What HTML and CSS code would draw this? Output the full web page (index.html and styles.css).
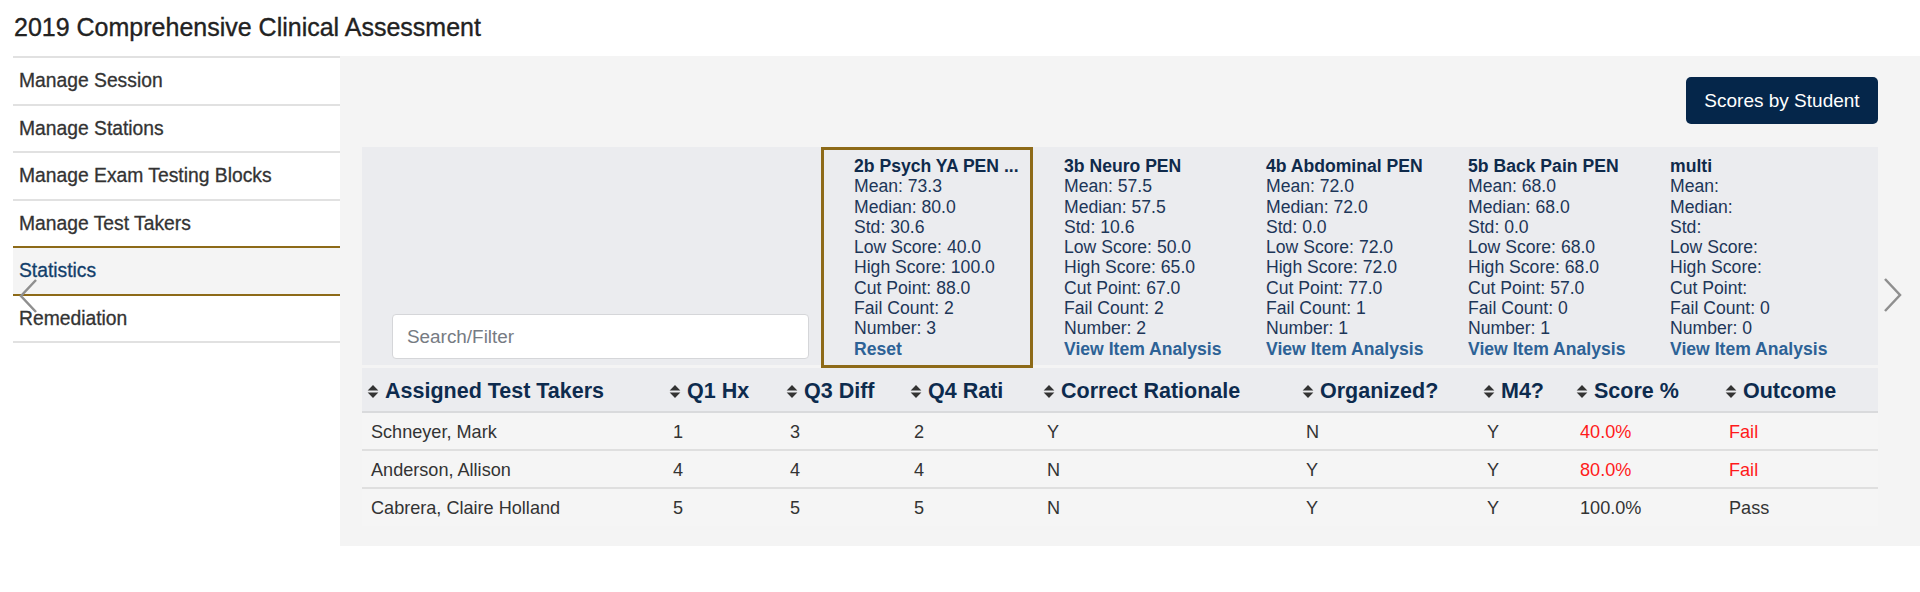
FILE: index.html
```html
<!DOCTYPE html>
<html lang="en">
<head>
<meta charset="utf-8">
<title>2019 Comprehensive Clinical Assessment</title>
<link rel="stylesheet" href="styles.css">
</head>
<body>
<div class="page">
  <h1 class="title">2019 Comprehensive Clinical Assessment</h1>
  <div class="layout">
    <nav class="sidebar">
      <ul class="nav">
        <li class="nav-item">Manage Session</li>
        <li class="nav-item">Manage Stations</li>
        <li class="nav-item">Manage Exam Testing Blocks</li>
        <li class="nav-item">Manage Test Takers</li>
        <li class="nav-item active">Statistics</li>
        <li class="nav-item">Remediation</li>
      </ul>
    </nav>
    <main class="main">
      <div class="toolbar">
        <button class="btn-primary" type="button">Scores by Student</button>
      </div>
      <section class="stats">
        <div class="filter">
          <input class="search" type="text" placeholder="Search/Filter">
        </div>
        <div class="cards">
          <div class="card active">
            <div class="card-title">2b Psych YA PEN ...</div>
            <div>Mean: 73.3</div>
            <div>Median: 80.0</div>
            <div>Std: 30.6</div>
            <div>Low Score: 40.0</div>
            <div>High Score: 100.0</div>
            <div>Cut Point: 88.0</div>
            <div>Fail Count: 2</div>
            <div>Number: 3</div>
            <div class="card-link">Reset</div>
          </div>
          <div class="card">
            <div class="card-title">3b Neuro PEN</div>
            <div>Mean: 57.5</div>
            <div>Median: 57.5</div>
            <div>Std: 10.6</div>
            <div>Low Score: 50.0</div>
            <div>High Score: 65.0</div>
            <div>Cut Point: 67.0</div>
            <div>Fail Count: 2</div>
            <div>Number: 2</div>
            <div class="card-link">View Item Analysis</div>
          </div>
          <div class="card">
            <div class="card-title">4b Abdominal PEN</div>
            <div>Mean: 72.0</div>
            <div>Median: 72.0</div>
            <div>Std: 0.0</div>
            <div>Low Score: 72.0</div>
            <div>High Score: 72.0</div>
            <div>Cut Point: 77.0</div>
            <div>Fail Count: 1</div>
            <div>Number: 1</div>
            <div class="card-link">View Item Analysis</div>
          </div>
          <div class="card">
            <div class="card-title">5b Back Pain PEN</div>
            <div>Mean: 68.0</div>
            <div>Median: 68.0</div>
            <div>Std: 0.0</div>
            <div>Low Score: 68.0</div>
            <div>High Score: 68.0</div>
            <div>Cut Point: 57.0</div>
            <div>Fail Count: 0</div>
            <div>Number: 1</div>
            <div class="card-link">View Item Analysis</div>
          </div>
          <div class="card">
            <div class="card-title">multi</div>
            <div>Mean:</div>
            <div>Median:</div>
            <div>Std:</div>
            <div>Low Score:</div>
            <div>High Score:</div>
            <div>Cut Point:</div>
            <div>Fail Count: 0</div>
            <div>Number: 0</div>
            <div class="card-link">View Item Analysis</div>
          </div>
        </div>
      </section>
      <table class="grid">
        <colgroup>
          <col class="c-name"><col class="c-q1"><col class="c-q3"><col class="c-q4"><col class="c-cr"><col class="c-org"><col class="c-m4"><col class="c-score"><col class="c-out">
        </colgroup>
        <thead>
          <tr>
            <th><svg class="sort" viewBox="0 0 10 14"><path d="M0 6 L5 1 L10 6 Z M0 8 L5 13 L10 8 Z"/></svg>Assigned Test Takers</th>
            <th><svg class="sort" viewBox="0 0 10 14"><path d="M0 6 L5 1 L10 6 Z M0 8 L5 13 L10 8 Z"/></svg>Q1 Hx</th>
            <th><svg class="sort" viewBox="0 0 10 14"><path d="M0 6 L5 1 L10 6 Z M0 8 L5 13 L10 8 Z"/></svg>Q3 Diff</th>
            <th><svg class="sort" viewBox="0 0 10 14"><path d="M0 6 L5 1 L10 6 Z M0 8 L5 13 L10 8 Z"/></svg>Q4 Rati</th>
            <th><svg class="sort" viewBox="0 0 10 14"><path d="M0 6 L5 1 L10 6 Z M0 8 L5 13 L10 8 Z"/></svg>Correct Rationale</th>
            <th><svg class="sort" viewBox="0 0 10 14"><path d="M0 6 L5 1 L10 6 Z M0 8 L5 13 L10 8 Z"/></svg>Organized?</th>
            <th><svg class="sort" viewBox="0 0 10 14"><path d="M0 6 L5 1 L10 6 Z M0 8 L5 13 L10 8 Z"/></svg>M4?</th>
            <th><svg class="sort" viewBox="0 0 10 14"><path d="M0 6 L5 1 L10 6 Z M0 8 L5 13 L10 8 Z"/></svg>Score %</th>
            <th><svg class="sort" viewBox="0 0 10 14"><path d="M0 6 L5 1 L10 6 Z M0 8 L5 13 L10 8 Z"/></svg>Outcome</th>
          </tr>
        </thead>
        <tbody>
          <tr>
            <td>Schneyer, Mark</td><td>1</td><td>3</td><td>2</td><td>Y</td><td>N</td><td>Y</td><td class="fail">40.0%</td><td class="fail">Fail</td>
          </tr>
          <tr>
            <td>Anderson, Allison</td><td>4</td><td>4</td><td>4</td><td>N</td><td>Y</td><td>Y</td><td class="fail">80.0%</td><td class="fail">Fail</td>
          </tr>
          <tr>
            <td>Cabrera, Claire Holland</td><td>5</td><td>5</td><td>5</td><td>N</td><td>Y</td><td>Y</td><td>100.0%</td><td>Pass</td>
          </tr>
        </tbody>
      </table>
    </main>
    <svg class="chev chev-prev" viewBox="0 0 18 34"><path d="M17 1 L2 17 L17 33"/></svg>
    <svg class="chev chev-next" viewBox="0 0 18 34"><path d="M1 1 L16 17 L1 33"/></svg>
  </div>
</div>
</body>
</html>
```

FILE: styles.css
```css
* { box-sizing: border-box; }

html, body {
  margin: 0;
  padding: 0;
  background: #ffffff;
  font-family: "Liberation Sans", Arial, sans-serif;
  color: #333333;
}

.page {
  width: 1920px;
}

.title {
  margin: 0;
  height: 56px;
  padding: 12px 0 0 14px;
  font-size: 25px;
  line-height: 30px;
  font-weight: normal;
  color: #222222;
  -webkit-text-stroke: 0.35px #222222;
}

.layout {
  position: relative;
  display: flex;
  align-items: flex-start;
}

/* Sidebar */
.sidebar {
  width: 327px;
  margin-left: 13px;
  flex: none;
}

.nav {
  list-style: none;
  margin: 0;
  padding: 0;
  border-bottom: 2px solid #e1e1e1;
}

.nav-item {
  height: 47.5px;
  line-height: 45.5px;
  border-top: 2px solid #e1e1e1;
  padding-left: 6px;
  font-size: 19.3px;
  color: #333333;
  -webkit-text-stroke: 0.3px #333333;
}

.nav-item.active {
  background: #f4f4f4;
  border-top-color: #8d6a18;
  color: #123e6a;
  -webkit-text-stroke: 0.3px #123e6a;
}

.nav-item.active + .nav-item {
  border-top-color: #8d6a18;
}

/* Main */
.main {
  flex: 1;
  background: #f4f4f4;
  padding: 21px 42px 20px 22px;
}

.toolbar {
  display: flex;
  justify-content: flex-end;
  margin-bottom: 23px;
}

.btn-primary {
  width: 192px;
  height: 47px;
  border: none;
  border-radius: 5px;
  background: #05264a;
  color: #ffffff;
  font-family: "Liberation Sans", Arial, sans-serif;
  font-size: 19px;
  padding: 0;
}

/* Stats panel */
.stats {
  display: flex;
  height: 218px;
  background: #ebecef;
}

.filter {
  width: 459px;
  flex: none;
  display: flex;
  align-items: flex-end;
  padding: 0 0 6px 30px;
}

.search {
  width: 417px;
  height: 45px;
  border: 1px solid #d5d6d9;
  border-radius: 4px;
  background: #ffffff;
  padding: 0 14px;
  font-family: "Liberation Sans", Arial, sans-serif;
  font-size: 18.9px;
  color: #333333;
}

.search::placeholder {
  color: #767b83;
}

.cards {
  display: flex;
  align-items: flex-start;
}

.card {
  width: 202px;
  flex: none;
  padding: 9px 0 0 31px;
  font-size: 17.6px;
  line-height: 20.3px;
  color: #1d3658;
  white-space: nowrap;
}

.card.active {
  width: 212px;
  height: 221px;
  border: 3px solid #8d6a18;
  padding: 6px 0 6px 30px;
}

.card-title {
  font-weight: bold;
  color: #0f2a4b;
}

.card-link {
  font-weight: bold;
  color: #2d6296;
}

/* Table */
.grid {
  width: 1516px;
  margin-top: 3px;
  border-collapse: collapse;
  table-layout: fixed;
}

.c-name { width: 302px; }
.c-q1 { width: 117px; }
.c-q3 { width: 124px; }
.c-q4 { width: 133px; }
.c-cr { width: 259px; }
.c-org { width: 181px; }
.c-m4 { width: 93px; }
.c-score { width: 149px; }
.c-out { width: 158px; }

.grid thead tr {
  height: 44px;
  background: #ebecef;
  border-bottom: 2px solid #d9dadc;
}

.grid th {
  text-align: left;
  padding: 3px 0 0 5px;
  font-size: 21.5px;
  font-weight: bold;
  color: #0d2b4e;
  white-space: nowrap;
}

.sort {
  width: 12px;
  height: 15px;
  margin-right: 6px;
  fill: #333333;
  vertical-align: -1px;
}

.grid tbody tr {
  height: 38px;
  background: #f5f5f5;
}

.grid tbody tr + tr {
  border-top: 2px solid #dfdfdf;
}

.grid td {
  padding: 2px 0 0 9px;
  font-size: 18.1px;
  color: #333333;
  white-space: nowrap;
}

.grid td.fail {
  color: #ff1a1a;
}

/* Carousel arrows */
.chev {
  position: absolute;
  width: 18px;
  height: 34px;
  fill: none;
  stroke: #8f8f8f;
  stroke-width: 2.5;
}

.chev-prev {
  left: 19px;
  top: 223px;
}

.chev-next {
  left: 1884px;
  top: 222px;
}
```
